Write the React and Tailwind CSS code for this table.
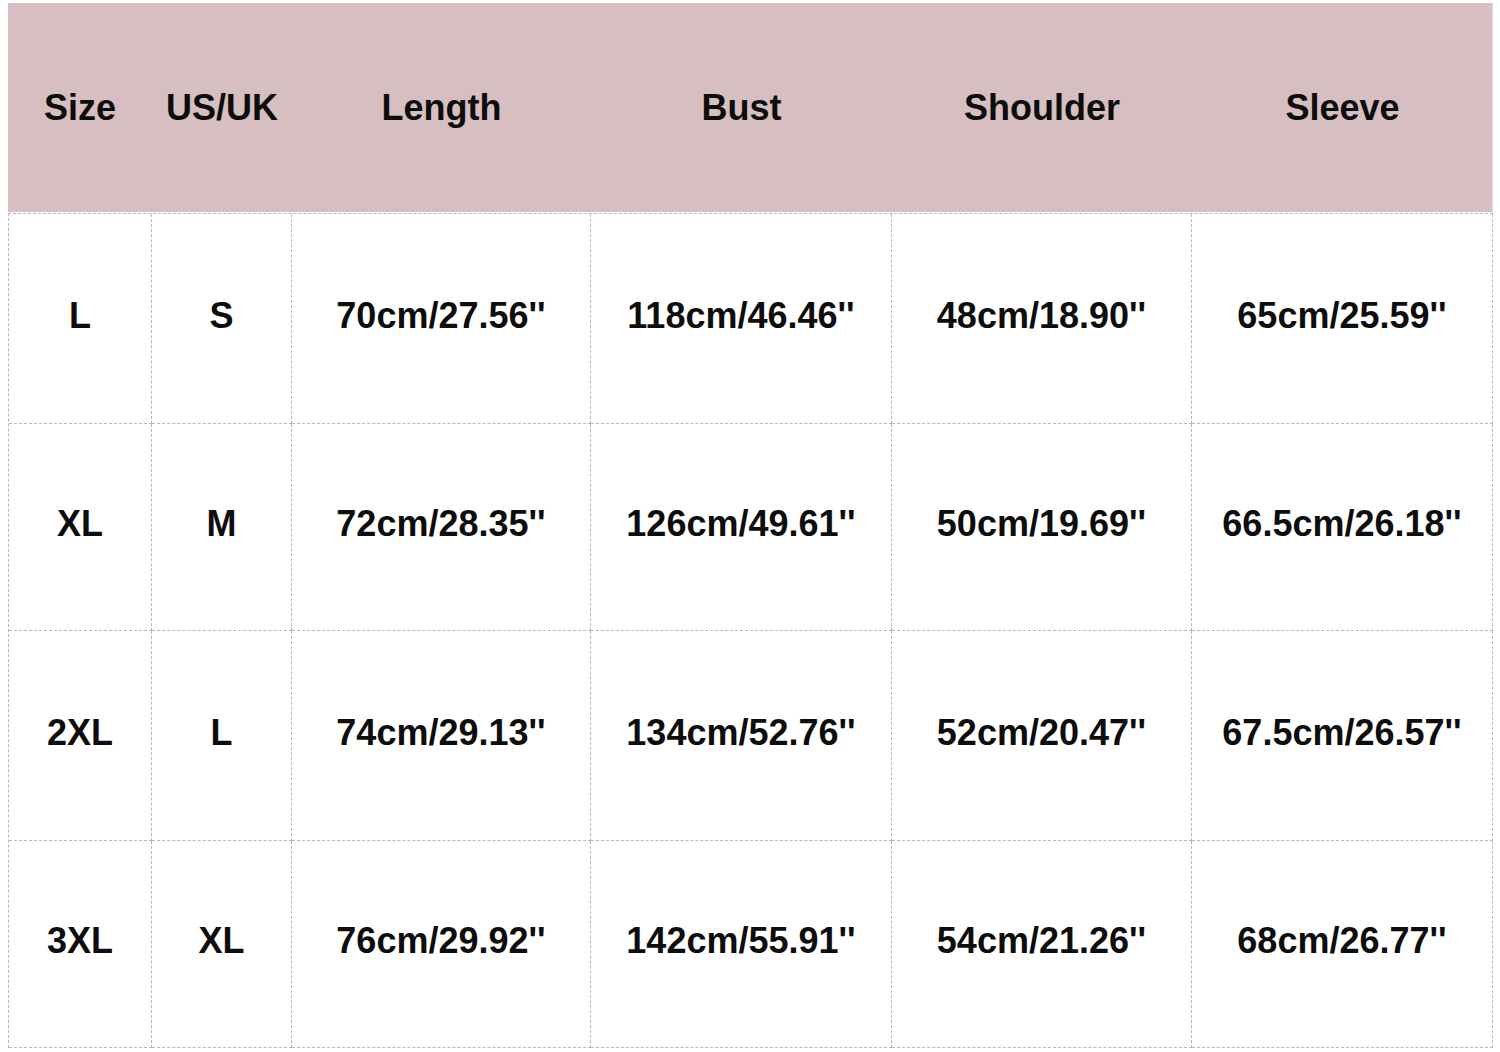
const headers = ["Size", "US/UK", "Length", "Bust", "Shoulder", "Sleeve"];

const rows = [
  ["L", "S", "70cm/27.56''", "118cm/46.46''", "48cm/18.90''", "65cm/25.59''"],
  ["XL", "M", "72cm/28.35''", "126cm/49.61''", "50cm/19.69''", "66.5cm/26.18''"],
  ["2XL", "L", "74cm/29.13''", "134cm/52.76''", "52cm/20.47''", "67.5cm/26.57''"],
  ["3XL", "XL", "76cm/29.92''", "142cm/55.91''", "54cm/21.26''", "68cm/26.77''"],
];

const rowHeights = ["h-[210px]", "h-[207px]", "h-[210px]", "h-[207px]"];

export default function App() {
  return (
    <main
      className="min-h-screen bg-white pl-[8px] pt-[3px]"
      style={{ fontFamily: '"Liberation Sans", Arial, sans-serif' }}
    >
      <div className="w-[1485px] text-[36px] font-bold text-[#0d0d0d]">
        {/* Header */}
        <div className="grid grid-cols-[144px_140px_299px_301px_300px_301px] h-[209px] bg-[#d6bec1] border-r border-[#e2d6d8]">
          {headers.map((h) => (
            <div key={h} className="flex items-center justify-center">
              {h}
            </div>
          ))}
        </div>
        <div className="h-[1px] bg-white" />

        {/* Body */}
        <div className="border-l border-t border-dashed border-[#b8b8b8]">
          {rows.map((row, i) => (
            <div
              key={i}
              className={`grid grid-cols-[143px_140px_299px_301px_300px_301px] ${rowHeights[i]}`}
            >
              {row.map((cell, j) => (
                <div
                  key={j}
                  className="flex items-center justify-center pb-[6px] border-r border-b border-dashed border-[#b8b8b8] whitespace-nowrap"
                >
                  {cell}
                </div>
              ))}
            </div>
          ))}
        </div>
      </div>
    </main>
  );
}
